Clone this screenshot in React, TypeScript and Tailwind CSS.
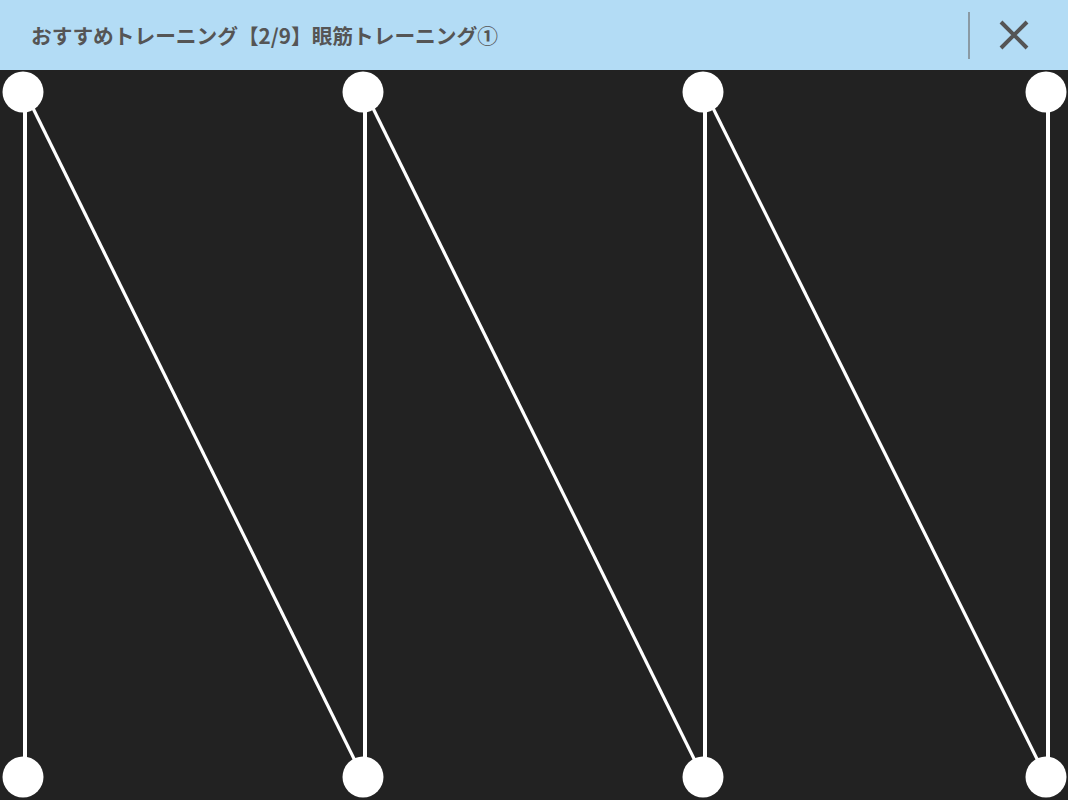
import React from 'react';

const COLS = [
  { cx: 23, lx: 25 },
  { cx: 363, lx: 365 },
  { cx: 703, lx: 705 },
  { cx: 1046, lx: 1048 },
];

const TOP = 22;
const BOTTOM = 707;

const ZigzagGuide: React.FC = () => (
  <svg width="1068" height="730" viewBox="0 0 1068 730" className="block">
    {/* vertical lines */}
    {COLS.map(c => (
      <line key={`v-${c.lx}`} x1={c.lx} y1={TOP} x2={c.lx} y2={BOTTOM} stroke="#fff" strokeWidth="4" />
    ))}
    {/* diagonals: top of column i to bottom of column i+1 */}
    {COLS.slice(0, -1).map((c, i) => (
      <line
        key={`d-${i}`}
        x1={c.lx}
        y1={TOP}
        x2={COLS[i + 1].cx}
        y2={BOTTOM}
        stroke="#fff"
        strokeWidth="3.2"
      />
    ))}
    {COLS.map(c => (
      <React.Fragment key={`c-${c.cx}`}>
        <circle cx={c.cx} cy={TOP} r="20.5" fill="#fff" />
        <circle cx={c.cx} cy={BOTTOM} r="20.5" fill="#fff" />
      </React.Fragment>
    ))}
  </svg>
);

export default function App() {
  return (
    <div className="w-[1068px] h-[800px] flex flex-col bg-[#222222] overflow-hidden">
      <header className="h-[70px] shrink-0 bg-[#b3dcf5] flex items-center">
        <h1
          className="flex-1 pl-[31px] text-[20.7px] font-bold text-[#555555] leading-none"
          style={{ fontFamily: '"Noto Sans CJK JP", "Noto Sans", sans-serif' }}
        >
          おすすめトレーニング【2/9】眼筋トレーニング①
        </h1>
        <div className="w-[2px] h-[47px] bg-[#8a9aa4] mr-[28px]" />
        <button className="w-[32px] h-[32px] mr-[38px] flex items-center justify-center">
          <svg width="30" height="30" viewBox="0 0 30 30">
            <path d="M2 2 L28 28 M28 2 L2 28" stroke="#555555" strokeWidth="4" strokeLinecap="butt" />
          </svg>
        </button>
      </header>
      <main className="flex-1">
        <ZigzagGuide />
      </main>
    </div>
  );
}
